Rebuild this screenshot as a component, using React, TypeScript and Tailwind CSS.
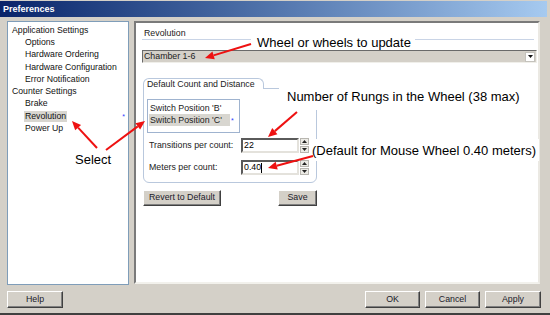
import type { ReactNode } from "react";

const font = "font-['Liberation_Sans',Arial,sans-serif]";

function WinButton({ label, className = "" }: { label: string; className?: string }) {
  return (
    <div
      className={`flex items-center justify-center bg-[#d4d0c8] border border-t-white border-l-white border-r-[#404040] border-b-[#404040] shadow-[inset_-1px_-1px_0_#808080] text-[8.8px] text-[#1a1a2a] ${className}`}
    >
      {label}
    </div>
  );
}

function Spinner() {
  return (
    <div className="flex flex-col gap-px w-[9px] ml-px">
      <div className="h-[7px] bg-[#ecebe6] border border-[#b8b6b0] flex items-center justify-center">
        <svg width="5" height="3" viewBox="0 0 5 3">
          <path d="M0 3 L2.5 0 L5 3 Z" fill="#222" />
        </svg>
      </div>
      <div className="h-[7px] bg-[#ecebe6] border border-[#b8b6b0] flex items-center justify-center">
        <svg width="5" height="3" viewBox="0 0 5 3">
          <path d="M0 0 L2.5 3 L5 0 Z" fill="#222" />
        </svg>
      </div>
    </div>
  );
}

function NumberField({ label, value, caret }: { label: string; value: string; caret?: boolean }) {
  return (
    <div className="flex items-center h-[15px]">
      <div className="w-[97px] pl-[5px] text-[8.8px] text-[#222]">{label}</div>
      <div className="w-[58px] h-[15px] bg-white border-2 border-t-[#5a5a5a] border-l-[#5a5a5a] border-r-[#e4e2dc] border-b-[#e4e2dc] flex items-center pl-[1px] text-[8.8px]">
        {value}
        {caret && <span className="w-px h-[10px] bg-black" />}
      </div>
      <Spinner />
    </div>
  );
}

function TreeRow({ children, indent, selected, mark }: { children: ReactNode; indent?: boolean; selected?: boolean; mark?: boolean }) {
  return (
    <div className={`flex items-center justify-between h-[12.3px] pr-[3px] ${indent ? "pl-[16px]" : "pl-[3px]"}`}>
      <span className={`px-[1px] leading-[11px] ${selected ? "bg-[#d8d6d0]" : ""}`}>{children}</span>
      {mark && <span className="text-[7px] text-[#2a3cff] leading-none">*</span>}
    </div>
  );
}

function Arrow({ x1, y1, x2, y2 }: { x1: number; y1: number; x2: number; y2: number }) {
  const dx = x2 - x1;
  const dy = y2 - y1;
  const len = Math.hypot(dx, dy);
  const ux = dx / len;
  const uy = dy / len;
  const hl = 9;
  const hw = 4;
  const bx = x2 - ux * hl;
  const by = y2 - uy * hl;
  const pts = `${x2},${y2} ${bx - uy * hw},${by + ux * hw} ${bx + uy * hw},${by - ux * hw}`;
  return (
    <g>
      <line x1={x1} y1={y1} x2={bx} y2={by} stroke="#ee1111" strokeWidth="2" />
      <polygon points={pts} fill="#ee1111" />
    </g>
  );
}

export default function App() {
  return (
    <div className={`relative w-[550px] h-[315px] bg-[#d4d0c8] overflow-hidden flex flex-col ${font}`}>
      <div className="h-[16px] mt-px mr-[3px] bg-linear-to-r from-[#0a246a] to-[#a6caf0] pl-[3px] text-[9px] font-bold text-white leading-[16px]">
        Preferences
      </div>

      <div className="flex gap-[5px] pl-[7px] pt-[4px]">
        {/* tree */}
        <div className="w-[122px] h-[264px] bg-white border border-[#7f9db9] pt-[2px] text-[8.7px] text-[#111]">
          <TreeRow>Application Settings</TreeRow>
          <TreeRow indent>Options</TreeRow>
          <TreeRow indent>Hardware Ordering</TreeRow>
          <TreeRow indent>Hardware Configuration</TreeRow>
          <TreeRow indent>Error Notification</TreeRow>
          <TreeRow>Counter Settings</TreeRow>
          <TreeRow indent>Brake</TreeRow>
          <TreeRow indent selected mark>Revolution</TreeRow>
          <TreeRow indent>Power Up</TreeRow>
        </div>

        {/* settings page */}
        <div className="w-[406px] h-[263px] bg-white border-2 border-t-[#7a7a7a] border-l-[#7a7a7a] border-r-[#ebe9e3] border-b-[#f2f1ec] pl-[6px] pr-[1px] pt-[5px]">
          <div className="h-[11px] pl-[2px] text-[8.8px] leading-[11px] text-[#222]">Revolution</div>
          <div className="h-px mr-[3px] bg-[#c9d4e6]" />

          <div className="mt-[10px] h-[13px] flex items-center bg-[#d4d0c8] border border-t-[#6a6a6a] border-l-[#6a6a6a] border-r-[#f0efea] border-b-[#f0efea] pl-[1px] text-[8.8px] text-[#222]">
            <span className="flex-1">Chamber 1-6</span>
            <div className="w-[10px] h-[10px] mr-px bg-white border border-[#c4c2bc] flex items-center justify-center">
              <svg width="5" height="3" viewBox="0 0 5 3">
                <path d="M0 0 L2.5 3 L5 0 Z" fill="#111" />
              </svg>
            </div>
          </div>

          {/* group */}
          <div className="mt-[15px] ml-px w-[174px]">
            <div className="relative z-10 w-[121px] h-[11px] -mb-px bg-white border border-b-0 border-[#b9c8dd] rounded-t-[6px] pl-[3px] text-[8.8px] leading-[11px] text-[#222]">
              Default Count and Distance
            </div>
            <div className="h-[95px] border border-[#b9c8dd] rounded-b-[6px] rounded-tr-[6px] pt-[10px]">
              <div className="ml-[3px] w-[93px] h-[34px] border border-[#9fb3cf] pt-[2px] pl-px text-[8.8px] text-[#222]">
                <div className="h-[12px] leading-[12px] pl-px">Switch Position 'B'</div>
                <div className="flex items-center h-[12px]">
                  <span className="bg-[#d8d6d0] leading-[12px] px-px w-[81px]">Switch Position 'C'</span>
                  <span className="ml-[1px] text-[7px] text-[#2a3cff] leading-none">*</span>
                </div>
              </div>
              <div className="mt-[5px]">
                <NumberField label="Transitions per count:" value="22" />
              </div>
              <div className="mt-[7px]">
                <NumberField label="Meters per count:" value="0.40" caret />
              </div>
            </div>
          </div>

          <div className="mt-[7px] ml-px flex w-[174px] justify-between">
            <WinButton label="Revert to Default" className="w-[78px] h-[16px]" />
            <WinButton label="Save" className="w-[39px] h-[16px]" />
          </div>
        </div>
      </div>

      <div className="mt-[6px] flex justify-between pl-[7px] pr-[9px]">
        <WinButton label="Help" className="w-[56px] h-[17px]" />
        <div className="flex gap-[5px]">
          <WinButton label="OK" className="w-[55px] h-[17px]" />
          <WinButton label="Cancel" className="w-[55px] h-[17px]" />
          <WinButton label="Apply" className="w-[56px] h-[17px]" />
        </div>
      </div>
      <div className="mt-auto h-[2px] bg-[#404040]" />

      {/* annotations */}
      <div className="absolute left-[251px] top-[35px] w-[164px] h-[15px] bg-white pl-[6px] text-[13px] leading-[15px] text-black">
        Wheel or wheels to update
      </div>
      <div className="absolute left-[279px] top-[87px] w-[244px] h-[23px] bg-white pl-[8px] pt-[2px] text-[13px] leading-[15px] text-black">
        Number of Rungs in the Wheel (38 max)
      </div>
      <div className="absolute left-[309px] top-[139px] w-[230px] h-[22px] bg-white pl-[3px] pt-[4px] text-[13px] leading-[15px] text-black">
        (Default for Mouse Wheel 0.40 meters)
      </div>
      <div className="absolute left-[75px] top-[152px] text-[13px] leading-[15px] text-black">Select</div>

      <svg className="absolute left-0 top-0" width="550" height="315">
        <Arrow x1={251} y1={44} x2={205} y2={58} />
        <Arrow x1={97} y1={148} x2={72} y2={121} />
        <Arrow x1={106} y1={150} x2={145} y2={121} />
        <Arrow x1={297} y1={112} x2={268} y2={137} />
        <Arrow x1={313} y1={156} x2={268} y2={168} />
      </svg>
    </div>
  );
}
